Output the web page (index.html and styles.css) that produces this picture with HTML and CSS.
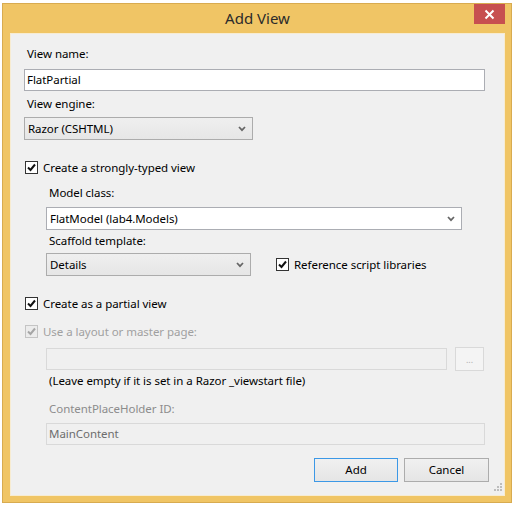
FILE: index.html
```html
<!DOCTYPE html>
<html>
<head>
<meta charset="utf-8">
<link rel="stylesheet" href="styles.css">
</head>
<body>
<div class="window">
  <div class="titlebar">
    <span class="title">Add View</span>
    <div class="close"><svg width="11" height="11" viewBox="0 0 11 11"><path d="M1.5 1.5 L9.5 9.5 M9.5 1.5 L1.5 9.5" stroke="#fff" stroke-width="2"/></svg></div>
  </div>
  <div class="content">
    <div class="label m12">View name:</div>
    <div class="textbox w461 m7">FlatPartial</div>
    <div class="label m5">View engine:</div>
    <div class="combo w229 m5"><span>Razor (CSHTML)</span><svg class="chev" width="8" height="6" viewBox="0 0 8 6"><path d="M1 1 L4 4.2 L7 1" fill="none" stroke="#666" stroke-width="1.7"/></svg></div>

    <div class="check-row m19">
      <span class="cb"><svg width="11" height="11" viewBox="0 0 11 11"><path d="M2 5.5 L4.5 8 L9 2.5" fill="none" stroke="#111" stroke-width="2"/></svg></span>
      <span>Create a strongly-typed view</span>
    </div>

    <div class="indent">
      <div class="label m10">Model class:</div>
      <div class="combo white w416 m6"><span>FlatModel (lab4.Models)</span><svg class="chev" width="8" height="6" viewBox="0 0 8 6"><path d="M1 1 L4 4.2 L7 1" fill="none" stroke="#666" stroke-width="1.7"/></svg></div>
      <div class="label m3">Scaffold template:</div>
      <div class="scaffold-row m4">
        <div class="combo w205"><span>Details</span><svg class="chev" width="8" height="6" viewBox="0 0 8 6"><path d="M1 1 L4 4.2 L7 1" fill="none" stroke="#666" stroke-width="1.7"/></svg></div>
        <div class="check-row">
          <span class="cb"><svg width="11" height="11" viewBox="0 0 11 11"><path d="M2 5.5 L4.5 8 L9 2.5" fill="none" stroke="#111" stroke-width="2"/></svg></span>
          <span>Reference script libraries</span>
        </div>
      </div>
    </div>

    <div class="check-row m19">
      <span class="cb"><svg width="11" height="11" viewBox="0 0 11 11"><path d="M2 5.5 L4.5 8 L9 2.5" fill="none" stroke="#111" stroke-width="2"/></svg></span>
      <span>Create as a partial view</span>
    </div>
    <div class="check-row disabled m12">
      <span class="cb"><svg width="11" height="11" viewBox="0 0 11 11"><path d="M2 5.5 L4.5 8 L9 2.5" fill="none" stroke="#a6a6a6" stroke-width="2"/></svg></span>
      <span>Use a layout or master page:</span>
    </div>

    <div class="indent">
      <div class="browse-row m8">
        <div class="textbox dis w401"></div>
        <div class="dots-btn">...</div>
      </div>
      <div class="label m2">(Leave empty if it is set in a Razor _viewstart file)</div>
      <div class="label grey m12">ContentPlaceHolder ID:</div>
      <div class="textbox dis w439 m6">MainContent</div>
    </div>

    <div class="buttons m13">
      <div class="btn default">Add</div>
      <div class="btn cancel">Cancel</div>
    </div>

    <svg class="grip" width="10" height="10" viewBox="0 0 10 10">
      <rect x="8" y="0" width="2" height="2" fill="#bdbdbd"/>
      <rect x="5" y="3" width="2" height="2" fill="#bdbdbd"/>
      <rect x="8" y="3" width="2" height="2" fill="#bdbdbd"/>
      <rect x="2" y="6" width="2" height="2" fill="#bdbdbd"/>
      <rect x="5" y="6" width="2" height="2" fill="#bdbdbd"/>
      <rect x="8" y="6" width="2" height="2" fill="#bdbdbd"/>
    </svg>
  </div>
</div>
</body>
</html>
```

FILE: styles.css
```css
html, body {
  margin: 0;
  padding: 0;
  background: #ffffff;
}
body {
  font-family: "Noto Sans", "Open Sans", sans-serif;
  font-size: 11.5px;
  letter-spacing: -0.05px;
  color: #000;
}
.window {
  margin: 3px 0 0 2px;
  width: 510px;
  height: 500px;
  box-sizing: border-box;
  background: #f0c565;
  border: 1px solid #d8ab50;
  padding: 0 6px 6px 7px;
  display: flex;
  flex-direction: column;
}
.titlebar {
  height: 29px;
  display: grid;
  grid-template-columns: 1fr auto 1fr;
  align-items: start;
}
.title {
  grid-column: 2;
  font-size: 15px;
  letter-spacing: 0;
  line-height: 29px;
  color: #2b2b2b;
}
.close {
  grid-column: 3;
  justify-self: end;
  width: 31px;
  height: 20px;
  background: #c75050;
  display: flex;
  align-items: center;
  justify-content: center;
}
.content {
  flex: 1;
  position: relative;
  background: #f0f0f0;
  border: 1px solid #f7ecd2;
  padding: 0 0 0 13px;
  display: flex;
  flex-direction: column;
  align-items: flex-start;
}
.label {
  line-height: 16px;
  height: 16px;
  padding-left: 3px;
  white-space: nowrap;
}
.grey { color: #8c8c8c; }
.m2 { margin-top: 2px; }
.m3 { margin-top: 3px; }
.m4 { margin-top: 4px; }
.m5 { margin-top: 5px; }
.m6 { margin-top: 6px; }
.m7 { margin-top: 7px; }
.m8 { margin-top: 8px; }
.m10 { margin-top: 10px; }
.m12 { margin-top: 12px; }
.m13 { margin-top: 13px; }
.m19 { margin-top: 19px; }

.textbox {
  box-sizing: border-box;
  height: 22px;
  border: 1px solid #abadb3;
  background: #fff;
  padding-left: 2px;
  line-height: 20px;
  white-space: nowrap;
}
.textbox.dis {
  background: #f0f0f0;
  border-color: #d9d9d9;
  color: #6d6d6d;
}
.w461 { width: 461px; }
.w229 { width: 229px; }
.w416 { width: 416px; }
.w205 { width: 205px; }
.w401 { width: 401px; }
.w439 { width: 439px; }

.combo {
  box-sizing: border-box;
  height: 23px;
  border: 1px solid #acacac;
  background: linear-gradient(#efefef, #e6e6e6);
  padding: 0 6px 0 3px;
  display: flex;
  align-items: center;
  justify-content: space-between;
  white-space: nowrap;
}
.combo.white {
  background: #fff;
  border-color: #abadb3;
}
.chev { display: block; }

.check-row {
  height: 16px;
  display: flex;
  align-items: center;
  gap: 5px;
  padding-left: 1px;
  white-space: nowrap;
}
.cb {
  box-sizing: border-box;
  width: 13px;
  height: 13px;
  border: 1px solid #333;
  background: #fff;
  display: flex;
  align-items: center;
  justify-content: center;
}
.disabled { color: #a0a0a0; }
.disabled .cb {
  border-color: #c4c4c4;
  background: #ececec;
}
.indent {
  padding-left: 22px;
  display: flex;
  flex-direction: column;
  align-items: flex-start;
}
.scaffold-row {
  height: 23px;
  display: flex;
  align-items: center;
  gap: 25px;
}
.scaffold-row .check-row { padding-left: 0; }
.browse-row {
  height: 24px;
  display: flex;
  align-items: center;
  gap: 8px;
}
.dots-btn {
  box-sizing: border-box;
  width: 29px;
  height: 24px;
  border: 1px solid #d9d9d9;
  background: #f4f4f4;
  color: #b0b0b0;
  font-size: 9px;
  text-align: center;
  line-height: 24px;
}
.buttons {
  align-self: stretch;
  display: flex;
  justify-content: flex-end;
  gap: 6px;
  padding-right: 15px;
}
.btn {
  box-sizing: border-box;
  height: 24px;
  border: 1px solid #acacac;
  background: linear-gradient(#f0f0f0, #e5e5e5);
  text-align: center;
  line-height: 22px;
}
.btn.default {
  width: 84px;
  border-color: #3c98e6;
}
.btn.cancel { width: 85px; }
.grip {
  position: absolute;
  right: 2px;
  bottom: 2px;
}
```
